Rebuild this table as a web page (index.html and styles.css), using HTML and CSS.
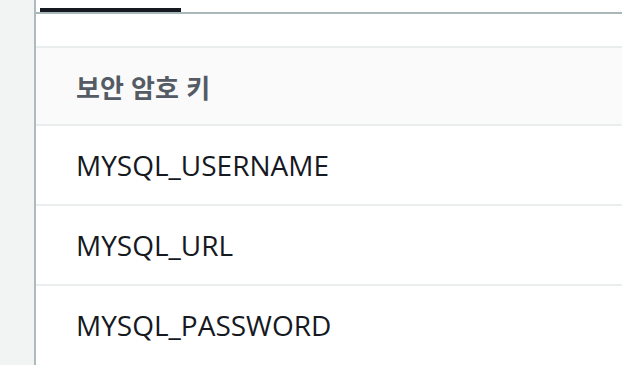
FILE: index.html
```html
<!DOCTYPE html>
<html lang="ko">
<head>
<meta charset="UTF-8" />
<meta name="viewport" content="width=device-width, initial-scale=1" />
<title>보안 암호 키</title>
<link rel="stylesheet" href="styles.css">
</head>
<body>

<div class="layout">
  <aside class="side-nav"></aside>

  <main class="content">
    <div class="tabs">
      <span class="tab active"></span>
    </div>

    <table class="secret-table">
      <thead>
        <tr><th>보안 암호 키</th></tr>
      </thead>
      <tbody>
        <tr><td>MYSQL_USERNAME</td></tr>
        <tr><td>MYSQL_URL</td></tr>
        <tr><td>MYSQL_PASSWORD</td></tr>
      </tbody>
    </table>
  </main>
</div>

</body>
</html>
```

FILE: styles.css
```css
html, body {
  margin: 0;
  padding: 0;
  height: 100%;
  background: #fff;
  overflow: hidden;
}
body {
  font-family: "Open Sans", "Noto Sans CJK KR", sans-serif;
  color: #16191f;
}
.layout {
  display: flex;
  height: 100%;
}
.side-nav {
  width: 34px;
  flex: none;
  background: #f2f3f3;
  border-right: 2px solid #aebabb;
}
.content {
  flex: 1;
  min-width: 0;
}
.tabs {
  height: 12px;
  padding-left: 4px;
  border-bottom: 2px solid #aab7b8;
  display: flex;
  align-items: flex-end;
}
.tab {
  display: block;
  width: 141px;
  height: 4px;
}
.tab.active {
  background: #16191f;
}
.secret-table {
  margin-top: 32px;
  width: 100%;
  border-collapse: collapse;
}
.secret-table th,
.secret-table td {
  text-align: left;
  padding: 0 0 0 40px;
  border-top: 2px solid #eaeded;
}
.secret-table th {
  height: 76px;
  background: #fafafa;
  color: #545b64;
  font-family: "Noto Sans CJK KR", sans-serif;
  font-weight: 700;
  font-size: 26px;
}
.secret-table td {
  height: 78px;
  font-size: 28px;
  font-weight: 400;
}
```
